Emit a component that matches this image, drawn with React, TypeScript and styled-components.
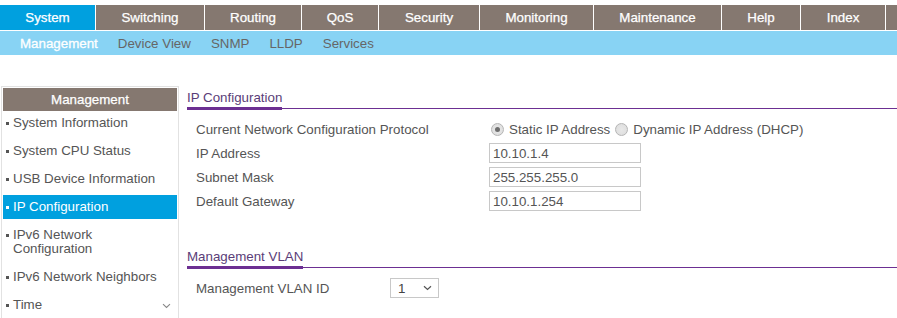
import React from 'react';
import styled, { createGlobalStyle } from 'styled-components';

const GlobalStyle = createGlobalStyle`
  body {
    margin: 0;
    background: #fff;
    font-family: "Liberation Sans", Arial, sans-serif;
    font-size: 10pt;
  }
`;

const tabs = [
  { name: 'System', width: 96 },
  { name: 'Switching', width: 109 },
  { name: 'Routing', width: 97 },
  { name: 'QoS', width: 77 },
  { name: 'Security', width: 101 },
  { name: 'Monitoring', width: 114 },
  { name: 'Maintenance', width: 128 },
  { name: 'Help', width: 79 },
  { name: 'Index', width: 85 },
];

const subTabs = ['Management', 'Device View', 'SNMP', 'LLDP', 'Services'];

const menu = [
  { label: 'System Information' },
  { label: 'System CPU Status' },
  { label: 'USB Device Information' },
  { label: 'IP Configuration', active: true },
  { label: 'IPv6 Network', label2: 'Configuration' },
  { label: 'IPv6 Network Neighbors' },
  { label: 'Time', expand: true },
];

export default function App() {
  return (
    <Page>
      <GlobalStyle />
      <TopNav>
        {tabs.map((t, i) => (
          <Tab key={t.name} $active={i === 0} style={{ width: t.width }}>
            {t.name}
          </Tab>
        ))}
        <Tab $fill />
      </TopNav>
      <SubNav>
        {subTabs.map((s, i) => (
          <SubTab key={s} $active={i === 0}>
            {s}
          </SubTab>
        ))}
      </SubNav>

      <Body>
        <Sidebar>
          <SideHeader>Management</SideHeader>
          {menu.map((m) => (
            <SideItem key={m.label + (m.label2 || '')} $active={!!m.active}>
              <Bullet $active={!!m.active} />
              <SideText>
                {m.label}
                {m.label2 && (
                  <>
                    <br />
                    {m.label2}
                  </>
                )}
              </SideText>
              {m.expand && (
                <Chevron width="9" height="6" viewBox="0 0 9 6">
                  <path d="M1 1.2 L4.5 4.5 L8 1.2" fill="none" stroke="#888" strokeWidth="1.1" />
                </Chevron>
              )}
            </SideItem>
          ))}
        </Sidebar>

        <Main>
          <SectionHead>
            <SectionTitle>IP Configuration</SectionTitle>
          </SectionHead>
          <Form>
            <Row>
              <Label $width={293}>Current Network Configuration Protocol</Label>
              <RadioGroup>
                <Radio $checked />
                <RadioText>Static IP Address</RadioText>
                <Radio />
                <RadioText>Dynamic IP Address (DHCP)</RadioText>
              </RadioGroup>
            </Row>
            <Row>
              <Label $width={293}>IP Address</Label>
              <TextBox>10.10.1.4</TextBox>
            </Row>
            <Row>
              <Label $width={293}>Subnet Mask</Label>
              <TextBox>255.255.255.0</TextBox>
            </Row>
            <Row>
              <Label $width={293}>Default Gateway</Label>
              <TextBox>10.10.1.254</TextBox>
            </Row>
          </Form>

          <SectionHead $spaced>
            <SectionTitle>Management VLAN</SectionTitle>
          </SectionHead>
          <Form>
            <Row>
              <Label $width={194}>Management VLAN ID</Label>
              <SelectBox>
                <span>1</span>
                <svg width="9" height="6" viewBox="0 0 9 6">
                  <path d="M1 1.2 L4.5 4.5 L8 1.2" fill="none" stroke="#555" strokeWidth="1.2" />
                </svg>
              </SelectBox>
            </Row>
          </Form>
        </Main>
      </Body>
    </Page>
  );
}

const Page = styled.div`
  width: 897px;
  height: 318px;
  overflow: hidden;
  padding-top: 5px;
  box-sizing: border-box;
`;

const TopNav = styled.div`
  display: flex;
  height: 25px;
  border-bottom: 1px solid #fff;
`;

const Tab = styled.div<{ $active?: boolean; $fill?: boolean }>`
  flex: ${(p) => (p.$fill ? '1' : 'none')};
  box-sizing: border-box;
  border-right: ${(p) => (p.$fill ? '0' : '1px solid #fff')};
  background: ${(p) => (p.$active ? '#00a0df' : '#857870')};
  color: #fff;
  display: flex;
  align-items: center;
  justify-content: center;
  font-size: 10pt;
  -webkit-text-stroke: 0.25px #fff;
`;

const SubNav = styled.div`
  display: flex;
  align-items: center;
  gap: 20px;
  height: 24px;
  padding-left: 20px;
  background: #88d3f4;
`;

const SubTab = styled.div<{ $active?: boolean }>`
  color: ${(p) => (p.$active ? '#fff' : '#666')};
  font-size: 10pt;
  -webkit-text-stroke: ${(p) => (p.$active ? '0.3px #fff' : '0')};
`;

const Body = styled.div`
  display: flex;
  align-items: flex-start;
  margin-top: 31px;
`;

const Sidebar = styled.div`
  width: 174px;
  margin-left: 1px;
  padding: 1px 1px 40px;
  border: 1px solid #e2e2e2;
  border-bottom: 0;
  display: flex;
  flex-direction: column;
  gap: 4px;
`;

const SideHeader = styled.div`
  height: 23px;
  margin-bottom: -4px;
  background: #857870;
  color: #fff;
  display: flex;
  align-items: center;
  justify-content: center;
  font-size: 10pt;
  -webkit-text-stroke: 0.25px #fff;
`;

const SideItem = styled.div<{ $active: boolean }>`
  display: flex;
  align-items: flex-start;
  padding: 5px 6px 5px 3px;
  line-height: 14px;
  background: ${(p) => (p.$active ? '#00a0df' : 'transparent')};
  color: ${(p) => (p.$active ? '#fff' : '#555')};
  font-size: 10pt;
`;

const Bullet = styled.span<{ $active: boolean }>`
  flex: none;
  width: 3px;
  height: 3px;
  margin: 6px 4px 0 0;
  background: ${(p) => (p.$active ? '#fff' : '#555')};
`;

const SideText = styled.span`
  flex: 1;
`;

const Chevron = styled.svg`
  flex: none;
  margin-top: 5px;
`;

const Main = styled.div`
  flex: 1;
  margin-left: 8px;
`;

const SectionHead = styled.div<{ $spaced?: boolean }>`
  display: flex;
  margin-top: ${(p) => (p.$spaced ? '32px' : '0')};
  padding-top: 3px;
  border-bottom: 1px solid #6c2f92;
`;

const SectionTitle = styled.div`
  line-height: 17px;
  padding-bottom: 1px;
  border-bottom: 3px solid #6c2f92;
  margin-bottom: -2px;
  color: #5a3d78;
  font-size: 10pt;
`;

const Form = styled.div`
  margin-top: 8px;
  padding-left: 9px;
`;

const Row = styled.div`
  display: flex;
  align-items: center;
  height: 24px;
`;

const Label = styled.div<{ $width: number }>`
  width: ${(p) => p.$width}px;
  flex: none;
  color: #555;
  font-size: 10pt;
`;

const RadioGroup = styled.div`
  display: flex;
  align-items: center;
  padding-left: 2px;
`;

const Radio = styled.span<{ $checked?: boolean }>`
  width: 11px;
  height: 11px;
  border-radius: 50%;
  border: 1px solid #b5b5b5;
  background: radial-gradient(circle, #e8e8e8 0%, #dcdcdc 100%);
  display: inline-flex;
  align-items: center;
  justify-content: center;
  margin-right: 5px;

  &::after {
    content: '';
    width: 5px;
    height: 5px;
    border-radius: 50%;
    background: ${(p) => (p.$checked ? '#6e6e6e' : 'transparent')};
  }
`;

const RadioText = styled.span`
  color: #555;
  font-size: 10pt;
  margin-right: 5px;
`;

const TextBox = styled.div`
  width: 152px;
  height: 20px;
  box-sizing: border-box;
  border: 1px solid #c8c8c8;
  padding-left: 3px;
  display: flex;
  align-items: center;
  color: #555;
  font-size: 10pt;
`;

const SelectBox = styled.div`
  width: 49px;
  height: 20px;
  box-sizing: border-box;
  border: 1px solid #c8c8c8;
  padding: 0 6px 0 7px;
  display: flex;
  align-items: center;
  justify-content: space-between;
  color: #444;
  font-size: 10pt;
`;
